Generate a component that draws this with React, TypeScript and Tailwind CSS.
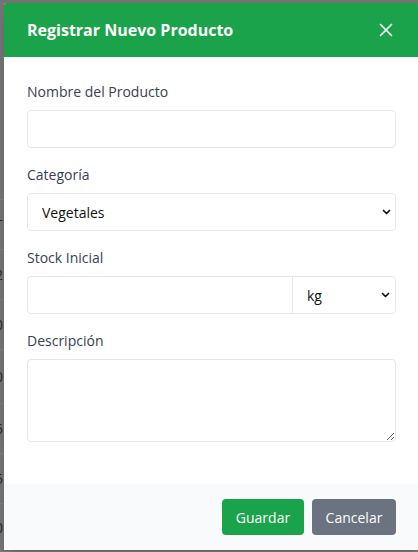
import React from "react";

const rows = [
  { top: "h-[200px]", ch: "" },
  { top: "h-[50px]", ch: "T" },
  { top: "h-[50px]", ch: "2" },
  { top: "h-[50px]", ch: "0" },
  { top: "h-[54px]", ch: "0" },
  { top: "h-[50px]", ch: "5" },
  { top: "h-[50px]", ch: "5" },
  { top: "h-[48px]", ch: "0" },
];

function Chevron() {
  return (
    <svg width="9" height="9" viewBox="0 0 9 9" className="pointer-events-none absolute right-[5px] top-1/2 -translate-y-1/2">
      <path d="M1.5 3 L4.5 6 L7.5 3" fill="none" stroke="#111" strokeWidth="1.7" strokeLinecap="round" strokeLinejoin="round" />
    </svg>
  );
}

export default function App() {
  return (
    <div className="relative h-[552px] w-[418px] overflow-hidden bg-[#737373] font-['Open_Sans',sans-serif]">
      {/* page behind the backdrop */}
      <div className="flex flex-col text-[14px] text-[#2a2a2a]">
        {rows.map((r, i) => (
          <div key={i} className={`${r.top} flex items-center border-b border-[#7c7c7c] -ml-[5px]`}>
            {r.ch}
          </div>
        ))}
      </div>

      {/* modal */}
      <div className="absolute left-[4px] top-[3px] w-[415px] overflow-hidden rounded-t-[2px] bg-white shadow-lg">
        <div className="flex h-[54px] items-center justify-between bg-[#1aa34a] pl-[23px] pr-[26px]">
          <h2 className="text-[16px] font-bold text-white">Registrar Nuevo Producto</h2>
          <svg width="14" height="14" viewBox="0 0 14 14">
            <path d="M1.5 1.5 L12.5 12.5 M12.5 1.5 L1.5 12.5" stroke="white" strokeWidth="1.7" strokeLinecap="round" />
          </svg>
        </div>

        <div className="flex flex-col px-[23px] pb-[42px] pt-[24px] text-[14px]">
          <label className="mb-[7px] leading-[22px] text-[#374151]">Nombre del Producto</label>
          <input className="h-[38px] rounded-[4px] border border-[#e5e7eb] px-3 outline-none" />

          <label className="mb-[7px] mt-[16px] leading-[22px] text-[#374151]">Categoría</label>
          <div className="relative">
            <select className="h-[38px] w-full appearance-none rounded-[4px] border border-[#e5e7eb] bg-white pl-[14px] text-[14px] text-[#111] outline-none">
              <option>Vegetales</option>
            </select>
            <Chevron />
          </div>

          <label className="mb-[7px] mt-[16px] leading-[22px] text-[#374151]">Stock Inicial</label>
          <div className="flex h-[38px] rounded-[4px] border border-[#e5e7eb]">
            <input className="min-w-0 flex-1 rounded-l-[4px] px-3 outline-none" />
            <div className="relative w-[103px] border-l border-[#e5e7eb]">
              <select className="h-full w-full appearance-none rounded-r-[4px] bg-white pl-[14px] text-[14px] text-[#111] outline-none">
                <option>kg</option>
              </select>
              <Chevron />
            </div>
          </div>

          <label className="mb-[7px] mt-[16px] leading-[22px] text-[#374151]">Descripción</label>
          <textarea className="h-[83px] rounded-[4px] border border-[#e5e7eb] px-3 py-2 outline-none" />
        </div>

        <div className="flex h-[66px] items-center justify-end gap-[8px] bg-[#f9fafb] pr-[23px]">
          <button className="h-[36px] w-[82px] rounded-[4px] bg-[#1aa34a] text-[14px] text-white">Guardar</button>
          <button className="h-[36px] w-[84px] rounded-[4px] bg-[#6b7280] text-[14px] text-white">Cancelar</button>
        </div>
      </div>
    </div>
  );
}
